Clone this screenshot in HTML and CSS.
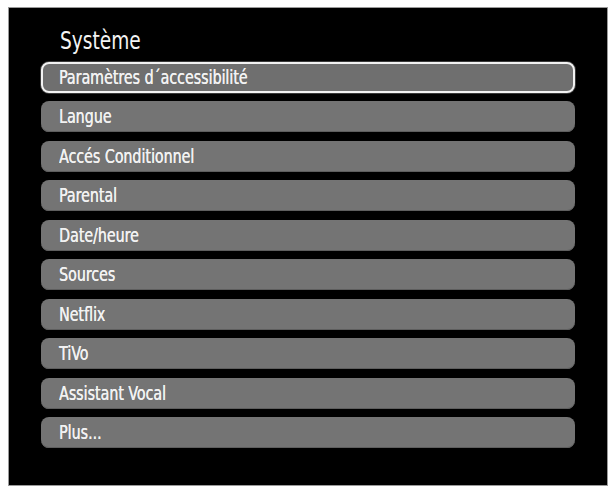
FILE: index.html
```html
<!DOCTYPE html>
<html lang="fr">
<head>
<meta charset="utf-8">
<title>Système</title>
<link rel="stylesheet" href="styles.css">
</head>
<body>
<div class="screen">
  <h1 class="title"><span class="txt">Système</span></h1>
  <ul class="menu">
    <li class="item selected"><span class="txt">Paramètres d´accessibilité</span></li>
    <li class="item"><span class="txt">Langue</span></li>
    <li class="item"><span class="txt">Accés Conditionnel</span></li>
    <li class="item"><span class="txt">Parental</span></li>
    <li class="item"><span class="txt">Date/heure</span></li>
    <li class="item"><span class="txt">Sources</span></li>
    <li class="item"><span class="txt">Netflix</span></li>
    <li class="item"><span class="txt">TiVo</span></li>
    <li class="item"><span class="txt">Assistant Vocal</span></li>
    <li class="item"><span class="txt">Plus...</span></li>
  </ul>
</div>
</body>
</html>
```
FILE: styles.css
```css
html, body {
  margin: 0;
  padding: 0;
  background: #ffffff;
}
body {
  padding: 7px 0 0 8px;
  font-family: "DejaVu Sans Condensed", "DejaVu Sans", sans-serif;
  font-stretch: condensed;
}
.screen {
  box-sizing: border-box;
  width: 600px;
  height: 479px;
  background: #000000;
  border: 1px solid #9a9a9a;
  padding: 18px 32px 0 32px;
}
.txt {
  display: inline-block;
  transform: scaleX(0.81);
  transform-origin: 0 50%;
  white-space: nowrap;
}
.title {
  margin: 0 0 6px 19px;
  font-size: 24px;
  line-height: 30px;
  font-weight: normal;
  color: #f4f4f4;
}
.title .txt {
  transform: scaleX(0.86);
}
.menu {
  list-style: none;
  margin: 0;
  padding: 0;
  display: flex;
  flex-direction: column;
  gap: 8.44px;
}
.item {
  box-sizing: border-box;
  height: 31px;
  line-height: 31px;
  padding-left: 18px;
  border-radius: 8px;
  background: #747474;
  box-shadow: inset 0 -1px 0 #5e5e5e;
  color: #f2f2f2;
  font-size: 19.5px;
  text-shadow: 0.3px 0 0 #f2f2f2;
}
.item.selected {
  border: 2px solid #f2f2f2;
  line-height: 27px;
  padding-left: 16px;
  background: #6f6f6f;
  box-shadow: 0 0 0 1px #3a3a3a;
}
```
